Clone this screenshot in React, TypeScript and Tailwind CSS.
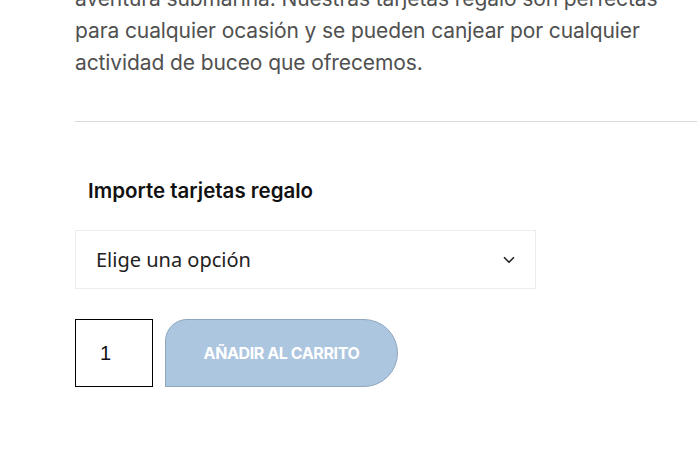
import { ChevronDown } from 'lucide-react'

export default function App() {
  return (
    <div className="w-[699px] h-[467px] overflow-hidden bg-white font-['Inter',sans-serif]">
      <div className="pl-[75px] mt-[-17px]">
        <p className="text-[21px] leading-[32px] text-[#505050] tracking-[-0.1px] whitespace-nowrap">
          aventura submarina. Nuestras tarjetas regalo son perfectas
          <br />
          para cualquier ocasión y se pueden canjear por cualquier
          <br />
          actividad de buceo que ofrecemos.
        </p>

        <div className="mt-[42px] mr-[2px] border-t border-[#d9d9d9]" />

        <form className="pt-[54px]">
          <label className="block pl-[13px] text-[20.5px] leading-[30px] font-semibold text-[#111] tracking-[0px]">
            Importe tarjetas regalo
          </label>

          <div className="mt-[24px] w-[461px] h-[59px] border border-[#ececec] flex items-center justify-between pl-[20px] pr-[17px]">
            <span className="font-['Noto_Sans',sans-serif] text-[20px] text-[#222]">Elige una opción</span>
            <ChevronDown className="w-[18px] h-[18px] text-[#222]" strokeWidth={2.2} />
          </div>

          <div className="mt-[30px] flex gap-[12px]">
            <div className="w-[78px] h-[68px] border border-black flex items-center pl-[24px] font-['Liberation_Sans',sans-serif] text-[20px] text-[#111]">
              1
            </div>
            <button
              type="button"
              className="w-[233px] h-[68px] bg-[#adc6df] border border-[#8ea7c0] rounded-tl-[22px] rounded-bl-none rounded-r-[34px] text-white font-bold text-[16px] tracking-[-0.4px] uppercase"
            >
              Añadir al carrito
            </button>
          </div>
        </form>
      </div>
    </div>
  )
}
